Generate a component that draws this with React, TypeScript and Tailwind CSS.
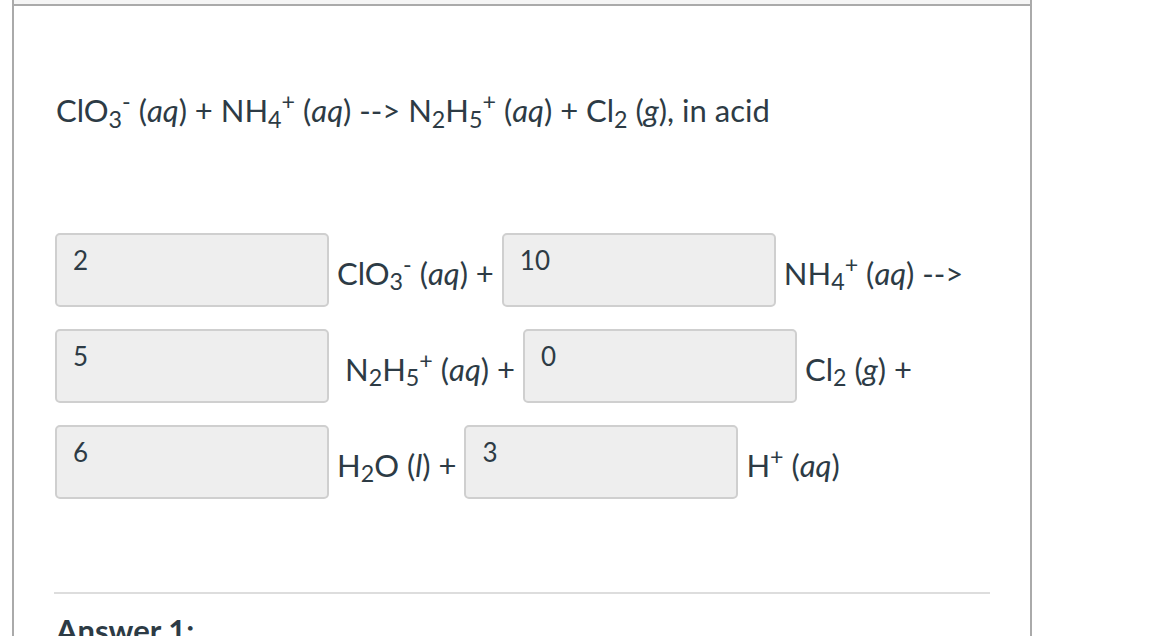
import React from 'react';

const font = { fontFamily: 'Lato, "Noto Sans", sans-serif' };

function Blank({ value }: { value: string }) {
  return (
    <input
      readOnly
      value={value}
      className="w-[274px] h-[74px] box-border border-2 border-[#cfcfcf] rounded-[5px] bg-[#eeeeee] pl-[16px] pt-[12px] pb-[32px] text-[26px] leading-[26px] text-[#2d3b45] outline-none"
      style={font}
    />
  );
}

function Aq() {
  return <i>aq</i>;
}

export default function App() {
  return (
    <div className="h-[636px] overflow-hidden bg-white text-[#2d3b45]" style={font}>
      <div className="ml-[12px] w-[1020px] h-full border-x-2 border-[#aaaaaa]">
        <div className="h-[6px] bg-[#f5f5f5] border-b-2 border-[#aaaaaa]" />
        <div className="px-[40px]">
          <p className="pt-[89px] pl-[2px] text-[31px] leading-[31px]">
            ClO<sub>3</sub><sup>-</sup> (<Aq />) + NH<sub>4</sub><sup>+</sup> (<Aq />) --&gt; N<sub>2</sub>H<sub>5</sub><sup>+</sup> (<Aq />) + Cl<sub>2</sub> (<i>g</i>), in acid
          </p>

          <div className="mt-[107px] flex flex-col gap-[22px] pl-px">
            <div className="flex items-center">
              <Blank value="2" />
              <span className="ml-[8px] mr-[8px] pt-[6px] text-[31px] leading-[31px] whitespace-nowrap">
                ClO<sub>3</sub><sup>-</sup> (<Aq />) +
              </span>
              <Blank value="10" />
              <span className="ml-[8px] pt-[6px] text-[31px] leading-[31px] whitespace-nowrap">
                NH<sub>4</sub><sup>+</sup> (<Aq />) --&gt;
              </span>
            </div>
            <div className="flex items-center">
              <Blank value="5" />
              <span className="ml-[16px] mr-[8px] pt-[6px] text-[31px] leading-[31px] whitespace-nowrap">
                N<sub>2</sub>H<sub>5</sub><sup>+</sup> (<Aq />) +
              </span>
              <Blank value="0" />
              <span className="ml-[8px] pt-[6px] text-[31px] leading-[31px] whitespace-nowrap">
                Cl<sub>2</sub> (<i>g</i>) +
              </span>
            </div>
            <div className="flex items-center">
              <Blank value="6" />
              <span className="ml-[8px] mr-[8px] pt-[6px] text-[31px] leading-[31px] whitespace-nowrap">
                H<sub>2</sub>O (<i>l</i>) +
              </span>
              <Blank value="3" />
              <span className="ml-[8px] pt-[6px] text-[31px] leading-[31px] whitespace-nowrap">
                H<sup>+</sup> (<Aq />)
              </span>
            </div>
          </div>

          <hr className="mt-[93px] border-0 h-[2px] bg-[#dddddd]" />
          <p className="mt-[21px] pl-[2px] text-[31px] leading-[31px] font-bold">Answer 1:</p>
        </div>
      </div>
    </div>
  );
}
